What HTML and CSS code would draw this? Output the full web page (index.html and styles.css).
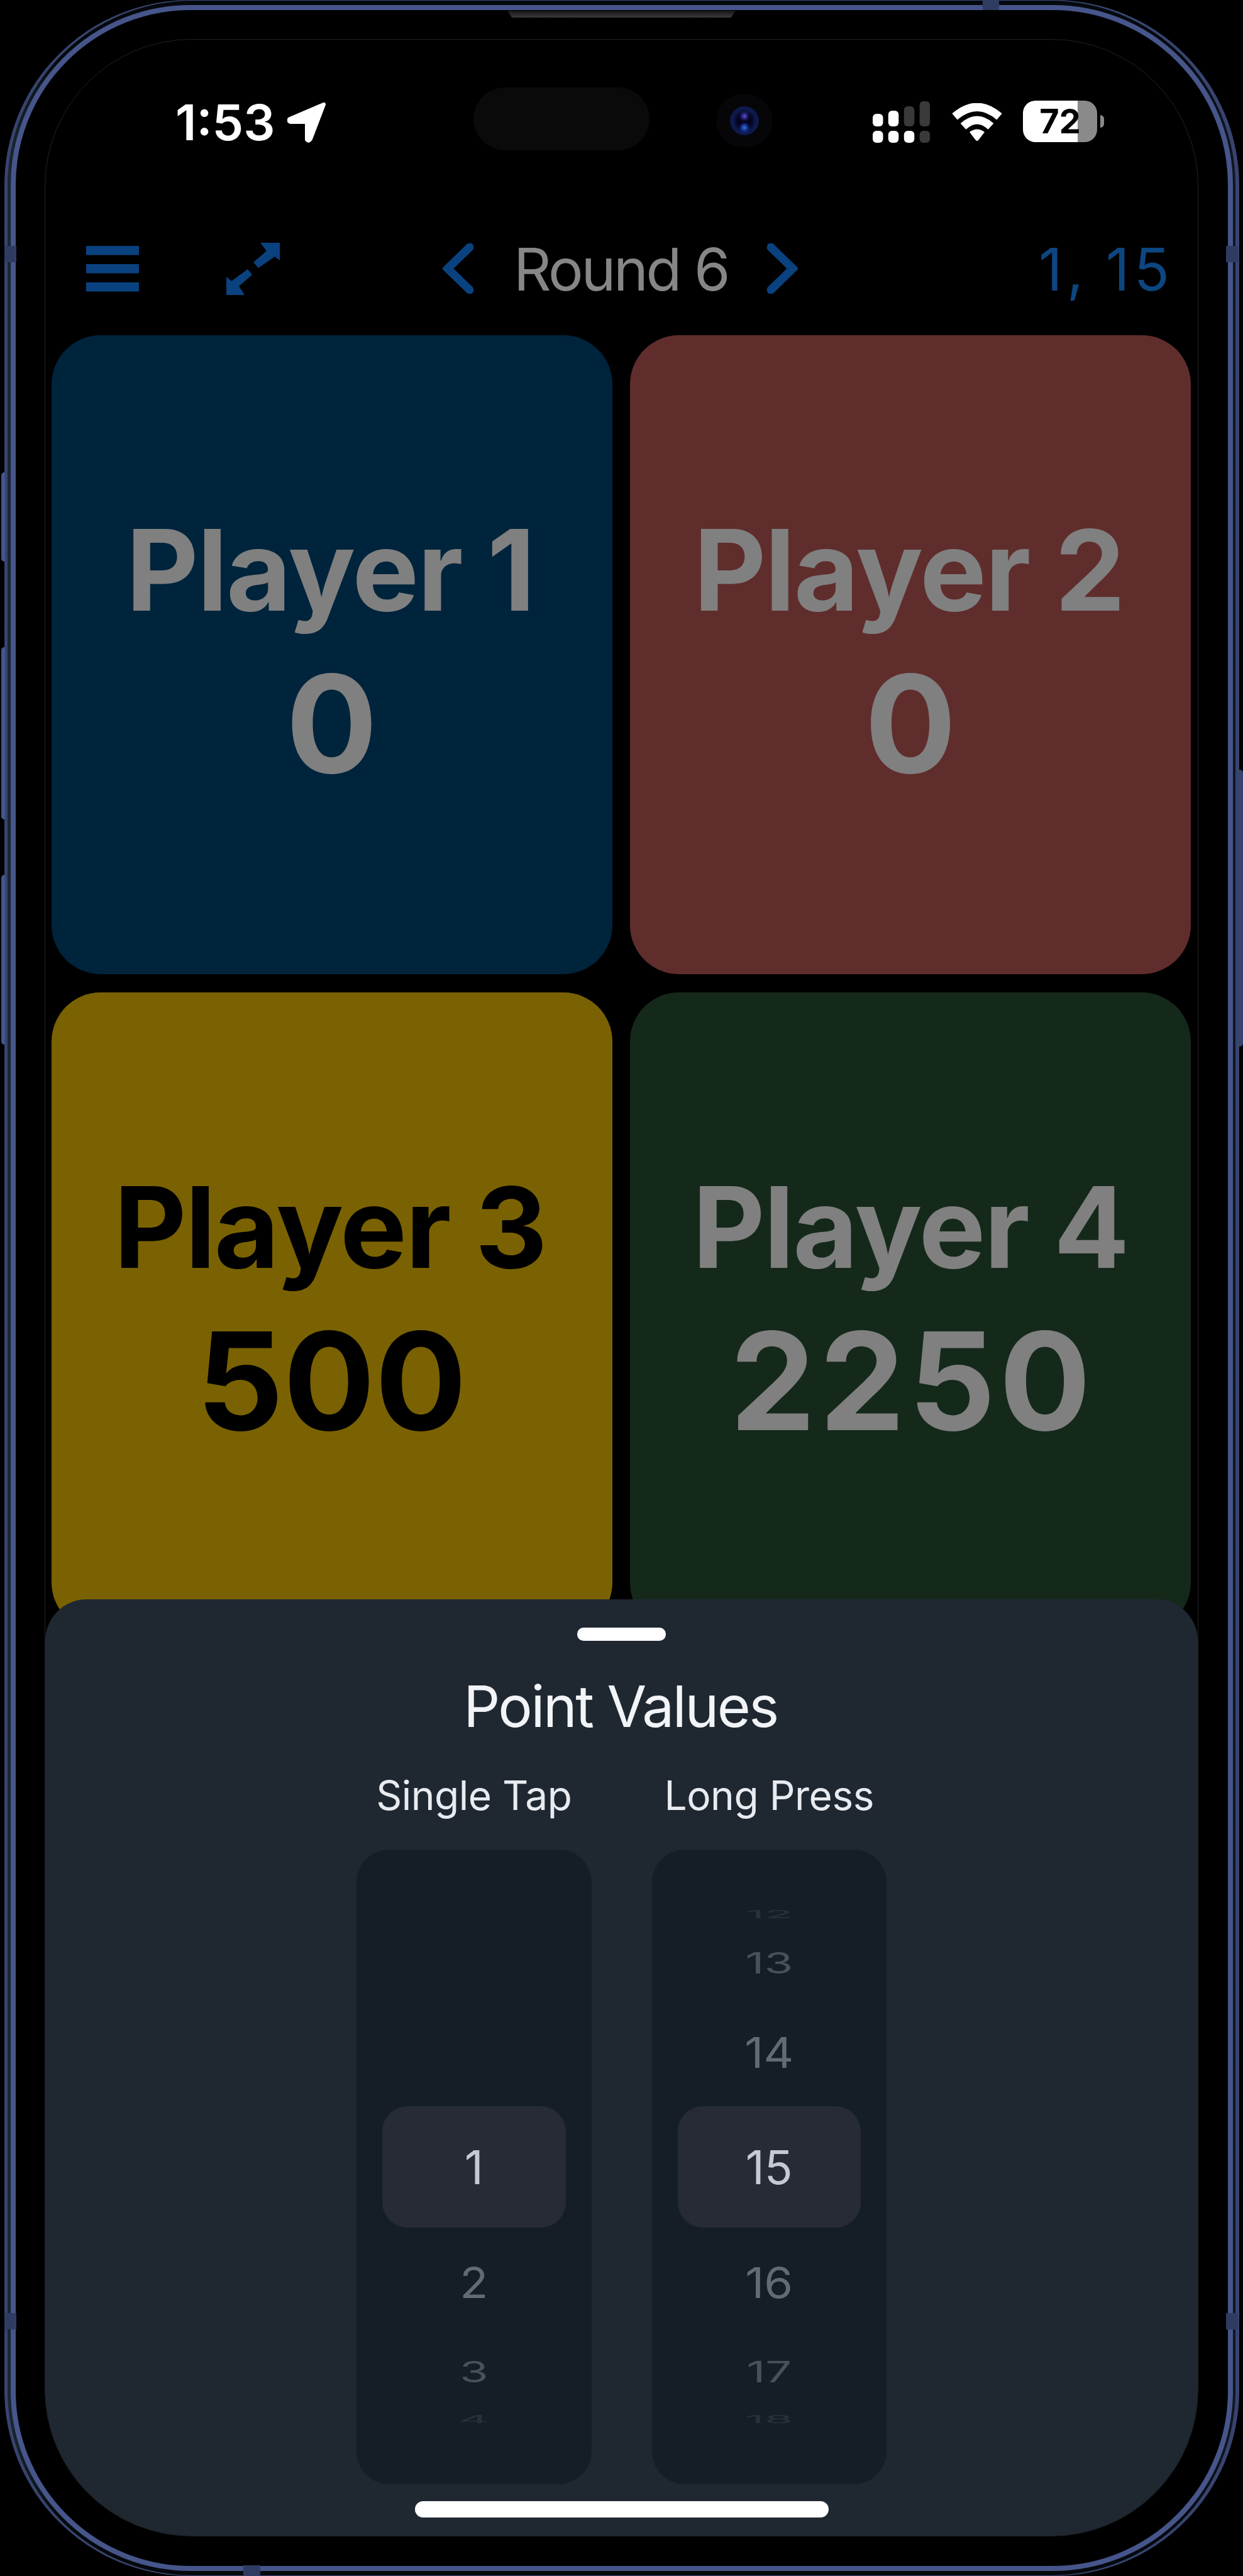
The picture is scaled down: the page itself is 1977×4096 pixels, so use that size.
FILE: index.html
```html
<!DOCTYPE html>
<html lang="en">
<head>
<meta charset="utf-8">
<title>Score Keeper</title>
<link rel="stylesheet" href="styles.css">
</head>
<body>
<div class="device">
  <i class="key key-action"></i><i class="key key-up"></i><i class="key key-down"></i><i class="key key-power"></i>
  <div class="rim"><div class="groove"><div class="bezel">
    <div class="screen">
      <header class="status">
        <div class="clock"><span class="time">1:53</span>
          <svg class="location" viewBox="0 0 62 64"><path d="M58 3 37 58Q34 63 31 59L31 31 5 31Q0 29 4 26Z" fill="#fff" stroke="#fff" stroke-width="6" stroke-linejoin="round"/></svg>
        </div>
        <div class="pill"></div>
        <div class="lens"><i></i></div>
        <svg class="signal" viewBox="0 0 92 66"><g fill="#fff"><rect y="20" width="16.5" height="20" rx="6"/><rect x="24.8" y="15" width="16.5" height="25" rx="6"/><rect y="47" width="16.5" height="19" rx="6"/><rect x="24.8" y="47" width="16.5" height="19" rx="6"/><rect x="49.8" y="47" width="16.5" height="19" rx="6"/></g><g fill="#3a3a3a"><rect x="49.8" y="8" width="16.5" height="32" rx="6"/><rect x="74.6" width="16.5" height="40" rx="6"/><rect x="74.6" y="47" width="16.5" height="19" rx="6"/></g></svg>
        <svg class="wifi" viewBox="0 0 80 60"><g fill="none" stroke="#fff" stroke-width="13"><path d="M4.500 21.500Q40-9 75.500 21.500"/><path d="M18 37Q40 17 62 37"/></g><path d="M28 46Q40 37 52 46L42 59Q40 61 38 59Z" fill="#fff"/></svg>
        <div class="battery"><span>72</span></div><i class="nub"></i>
      </header>
      <nav class="toolbar">
        <svg class="menu" viewBox="0 0 84 73" fill="#0a4280"><rect width="84" height="14.500"/><rect y="29" width="84" height="14.500"/><rect y="58" width="84" height="14.500"/></svg>
        <svg class="expand" viewBox="0 0 85 83" fill="#0a4280"><path d="M54 0H85V28L77 22 51 40 43 31 64 13Z"/><path d="M0 54 8 61 34 42 41 51 20 69 29 83H0Z"/></svg>
        <svg class="chev prev" viewBox="0 0 49 80"><path d="M43 6 8 40 43 74"/></svg>
        <span class="round">Round 6</span>
        <svg class="chev next" viewBox="0 0 49 80"><path d="M6 6 41 40 6 74"/></svg>
        <span class="points">1, 15</span>
      </nav>
      <main class="grid">
        <section class="card blue"><h2>Player 1</h2><b>0</b></section>
        <section class="card red"><h2>Player 2</h2><b>0</b></section>
        <section class="card gold"><h2>Player 3</h2><b>500</b></section>
        <section class="card green"><h2>Player 4</h2><b>2250</b></section>
      </main>
      <section class="sheet">
        <i class="handle"></i>
        <h1>Point Values</h1>
        <div class="pickers">
          <div class="picker"><label class="single">Single Tap</label>
            <div class="wheel">
              <div class="row r3"></div><div class="row r2"></div><div class="row r1"></div>
              <div class="row r0"><span>1</span></div>
              <div class="row r1"><span>2</span></div><div class="row r2"><span>3</span></div><div class="row r3"><span>4</span></div>
            </div></div>
          <div class="picker"><label class="long">Long Press</label>
            <div class="wheel">
              <div class="row r3"><span>12</span></div><div class="row r2"><span>13</span></div><div class="row r1"><span>14</span></div>
              <div class="row r0"><span>15</span></div>
              <div class="row r1"><span>16</span></div><div class="row r2"><span>17</span></div><div class="row r3"><span>18</span></div>
            </div></div>
        </div>
        <i class="home"></i>
      </section>
    </div>
  </div></div></div>
  <i class="speaker"></i>
  <i class="seam s1"></i><i class="seam s2"></i><i class="seam s3"></i><i class="seam s4"></i><i class="seam s5"></i><i class="seam s6"></i>
</div>
</body>
</html>
```
FILE: styles.css
```css
* { box-sizing: border-box; margin: 0; }
body { background: #000; font-family: Inter, "Liberation Sans", sans-serif; overflow: hidden; }
i { display: block; }
svg { display: block; flex: none; }
.device { position: relative; width: 1977px; height: 4096px; padding: 0 6.5px; background: #000; }
.rim { height: 4096px; padding: 1px 5.5px; border-radius: 295px; background: #38446f; }
.groove { height: 4094px; padding: 7px 4.5px; border-radius: 294px; background: linear-gradient(90deg, #1b2733, #05090d 80px, #05090d 1870px, #10171f); }
.bezel { height: 4080px; padding: 46px 46.5px 46.5px; border: 8.5px solid #46558a; border-radius: 286px; background: #000; }
.screen { height: 3971px; border: 1px solid #222; border-radius: 234px; overflow: hidden; display: flex; flex-direction: column; }

/* hardware around the glass */
.key { position: absolute; left: 2px; width: 6px; background: #46558a; border-radius: 5px 0 0 5px; }
.key-action { top: 751px; height: 142px; }
.key-up { top: 1029px; height: 274px; }
.key-down { top: 1391px; height: 270px; }
.key-power { left: 1969px; width: 8px; top: 1224px; height: 440px; border-radius: 0 5px 5px 0; background: #38446f; }
.speaker { position: absolute; left: 807px; top: 17px; width: 363px; height: 11px; background: linear-gradient(#161616, #3a3a3a); clip-path: polygon(0 0, 100% 0, 98% 100%, 2% 100%); }
.seam { position: absolute; width: 19px; height: 26px; background: #303b62; }
.s1 { left: 7px; top: 391px; }
.s2 { left: 1950px; top: 391px; }
.s3 { left: 7px; top: 3678px; }
.s4 { left: 1950px; top: 3678px; }
.s5 { left: 1563px; top: 0; width: 26px; height: 16px; }
.s6 { left: 387px; top: 4079px; width: 27px; height: 17px; }

/* status bar */
.status { height: 300px; flex: none; display: flex; align-items: flex-start; padding-left: 207px; }
.clock { display: flex; width: 474px; padding-top: 100px; gap: 18px; }
.time { color: #fff; font-size: 79px; line-height: 62px; font-weight: 600; width: 160px; white-space: nowrap; }
.location { width: 62px; height: 64px; }
.pill { width: 280px; height: 100px; border-radius: 50px; background: #0a0a0a; margin-top: 76px; }
.lens { width: 90px; height: 86px; border-radius: 50%; background: #060508; margin: 86px 0 0 106px; padding: 20px 22px; }
.lens i { width: 46px; height: 46px; border-radius: 50%; background: radial-gradient(circle at 50% 34%, #6a5ad0 0, #2a2380 10%, transparent 22%), radial-gradient(circle at 50% 74%, #2a7fc0 0, #172a90 12%, transparent 22%), radial-gradient(circle, #05041c 35%, #0e1a4c 55%); }
.signal { width: 92px; height: 66px; margin: 98px 0 0 159px; }
.wifi { width: 80px; height: 60px; margin: 101px 0 0 34px; }
.battery { width: 118px; height: 66px; border-radius: 20px; background: linear-gradient(90deg, #fff 87px, #8a8a8a 87px); margin: 97px 0 0 33px; text-align: center; }
.battery span { display: block; font-size: 54px; line-height: 66px; font-weight: 700; color: #000; }
.nub { width: 6px; height: 20px; border-radius: 0 8px 8px 0; background: #8a8a8a; margin: 120px 0 0 5px; }

/* toolbar */
.toolbar { height: 170px; flex: none; display: flex; align-items: flex-start; padding-left: 65px; }
.menu { width: 84px; height: 73px; margin-top: 28px; }
.expand { width: 85px; height: 83px; margin: 23px 0 0 139px; }
.chev { width: 49px; height: 80px; margin-top: 24px; fill: none; stroke: #0a4280; stroke-width: 13; stroke-linecap: round; stroke-linejoin: miter; }
.prev { margin-left: 259px; }
.round { width: 334px; margin: 19px 69px 0 64px; font-size: 93px; line-height: 92px; color: #868686; white-space: nowrap; letter-spacing: -3.4px; }
.points { margin: 19px 0 0 383px; font-size: 93px; line-height: 92px; color: #0d4680; white-space: nowrap; letter-spacing: 7px; word-spacing: -5px; }

/* score cards */
.grid { flex: none; height: 2010px; display: grid; grid-template-columns: 892px 892px; grid-auto-rows: 1016px; gap: 29px 28.5px; padding-left: 9.5px; }
.card { border-radius: 78px; display: flex; flex-direction: column; align-items: center; padding-top: 267px; color: #808080; }
.card h2 { font-size: 178px; line-height: 214px; font-weight: 700; white-space: nowrap; letter-spacing: -2px; margin: 0 5px 6px 0; }
.card b { font-size: 216px; line-height: 262px; font-weight: 700; }
.blue { background: #00243c; }
.red { background: #602d2d; }
.gold { background: #7a6202; color: #000; }
.green { background: #15291b; }
.green h2 { margin-right: 0; }
.green b { letter-spacing: 6px; margin-right: -6px; }

/* point picker sheet */
.sheet { position: relative; flex: none; height: 1491px; border-radius: 66px 66px 0 0; background: #1f2831; display: flex; flex-direction: column; align-items: center; padding-top: 45px; }
.handle { width: 141px; height: 21px; border-radius: 10px; background: #fff; }
.sheet h1 { font-size: 91px; line-height: 110px; font-weight: 400; color: #f2f4f7; margin: 49px 3px 0 0; white-space: nowrap; letter-spacing: -2.5px; }
.pickers { display: flex; gap: 96px; margin-top: 48px; }
.picker { width: 373.5px; display: flex; flex-direction: column; align-items: center; }
.picker label { font-size: 64px; line-height: 78px; color: #e8ebef; white-space: nowrap; margin-bottom: 47px; letter-spacing: -.5px; }
.picker .wheel { width: 373.5px; height: 1009px; border-radius: 52px; background: #151e27; padding: 82px 41px 0; }
.row { display: flex; justify-content: center; align-items: center; font-size: 74px; }
.r0 { height: 193px; background: #262b36; border-radius: 40px; color: #c6c9d2; }
.r1 { height: 173px; color: #626b73; }
.r2 { height: 111px; color: #48515a; }
.r3 { height: 42px; color: #28313a; }
.r1 span { transform: scaleY(.91); }
.r2 span { transform: scaleY(.63); }
.r3 span { transform: scaleY(.24); }
.home { width: 658px; height: 26px; border-radius: 13px; background: #fff; margin-top: 27px; }
```
